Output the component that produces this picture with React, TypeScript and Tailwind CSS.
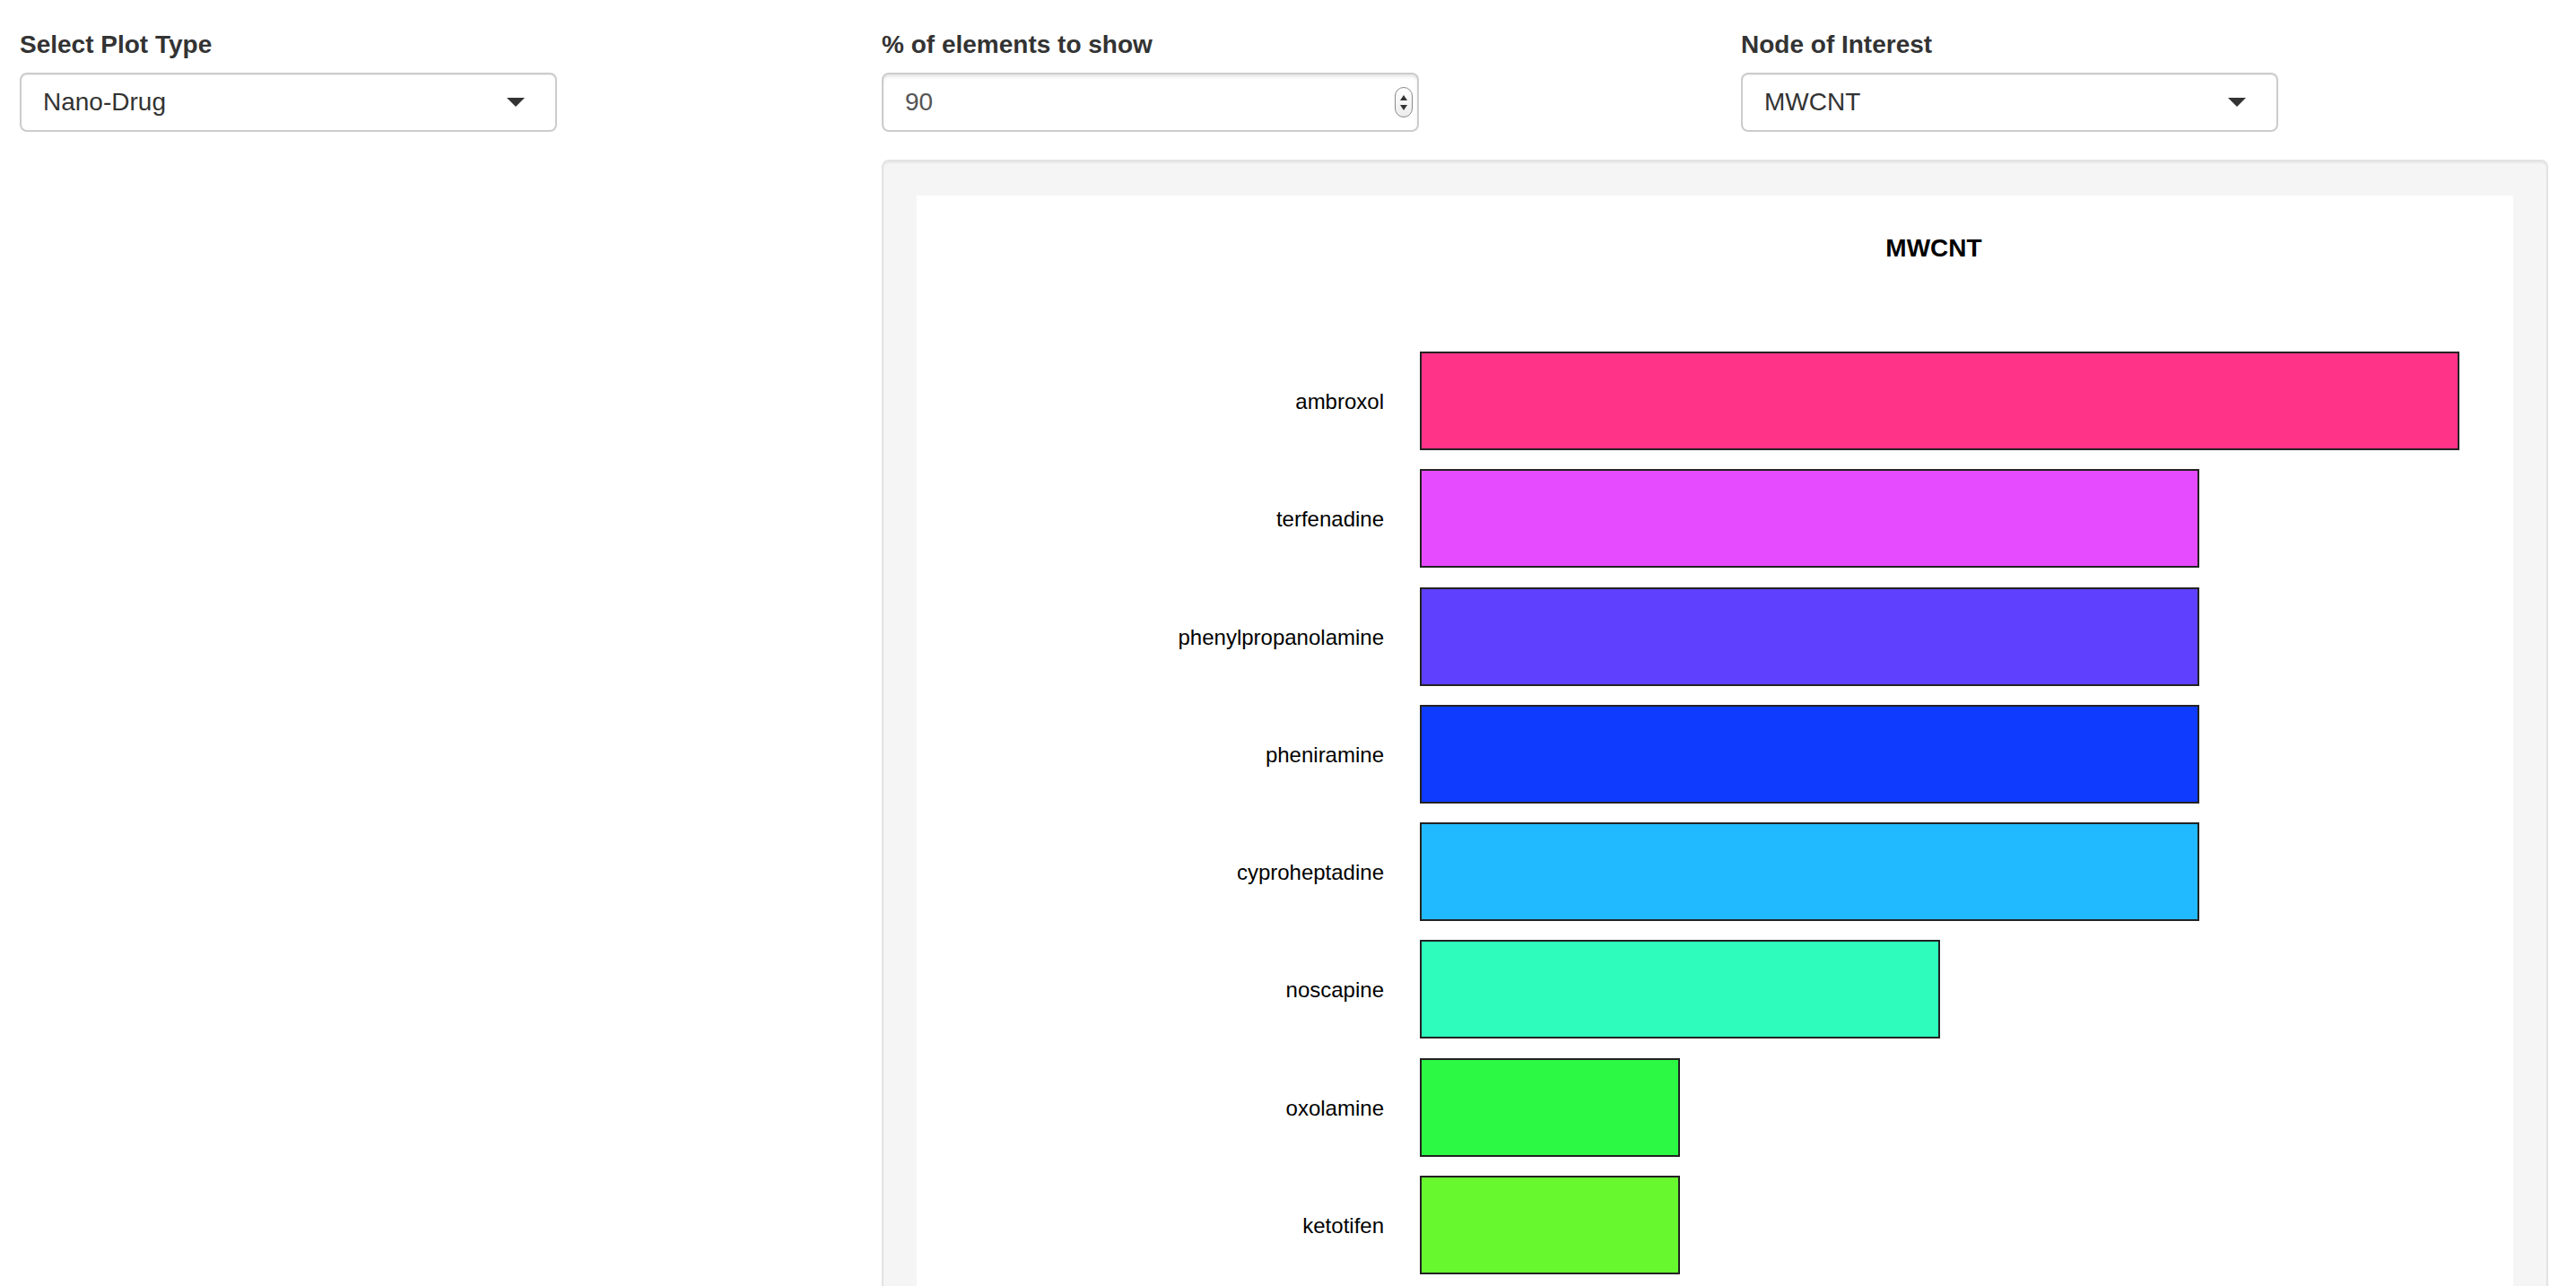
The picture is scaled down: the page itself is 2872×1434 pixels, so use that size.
import React from "react";

type Bar = { name: string; value: number; color: string };

const bars: Bar[] = [
  { name: "ambroxol", value: 4, color: "#ff3388" },
  { name: "terfenadine", value: 3, color: "#e64bff" },
  { name: "phenylpropanolamine", value: 3, color: "#5f40ff" },
  { name: "pheniramine", value: 3, color: "#0f3bff" },
  { name: "cyproheptadine", value: 3, color: "#21b9ff" },
  { name: "noscapine", value: 2, color: "#2dfcbd" },
  { name: "oxolamine", value: 1, color: "#2bf944" },
  { name: "ketotifen", value: 1, color: "#67f92e" },
];

const UNIT = 289.75;

const SelectBox = ({ value }: { value: string }) => {
  return (
    <div className="flex items-center justify-between w-[599px] h-[66px] border-2 border-[#cccccc] rounded-[8px] bg-white pl-[24px] pr-[34px] shadow-[inset_0_1px_1px_rgba(0,0,0,0.075)]">
      <span className="text-[28px] text-[#333333]">{value}</span>
      <div className="w-0 h-0 border-l-[10px] border-r-[10px] border-t-[10px] border-l-transparent border-r-transparent border-t-[#333333]" />
    </div>
  );
};

const NumberBox = ({ value }: { value: string }) => {
  return (
    <div className="flex items-center justify-between w-[599px] h-[66px] border-2 border-[#cccccc] rounded-[8px] bg-white pl-[24px] pr-[5px] shadow-[inset_0_3px_3px_rgba(0,0,0,0.09)]">
      <span className="text-[28px] text-[#555555]">{value}</span>
      <div className="flex flex-col items-center justify-center gap-[5px] w-[20px] h-[34px] rounded-full border border-[#8a8a8a] bg-gradient-to-b from-white to-[#ececec]">
        <svg width="8" height="6" viewBox="0 0 8 6">
          <path d="M4 0 L8 6 L0 6 Z" fill="#333" />
        </svg>
        <svg width="8" height="6" viewBox="0 0 8 6">
          <path d="M0 0 L8 0 L4 6 Z" fill="#333" />
        </svg>
      </div>
    </div>
  );
};

const Field = ({ label, children }: { label: string; children: React.ReactNode }) => {
  return (
    <div className="flex flex-col">
      <label className="text-[28px] leading-[40px] font-bold text-[#333333] mb-[11px]">{label}</label>
      {children}
    </div>
  );
};

const BarChart = () => {
  return (
    <div className="flex flex-col bg-white h-full pt-[45px]">
      <div className="pl-[561px]">
        <div className="w-[1146px] text-center text-[28px] leading-[28px] font-bold text-black">MWCNT</div>
      </div>
      <div className="flex flex-col gap-[21.3px] mt-[101px]">
        {bars.map((b) => (
          <div key={b.name} className="flex items-center h-[110px]">
            <div className="w-[521px] text-right text-[24px] text-black pt-[2px]">{b.name}</div>
            <div
              className="h-[110px] ml-[40px] border-2 border-[#222222]"
              style={{ width: b.value * UNIT, backgroundColor: b.color }}
            />
          </div>
        ))}
      </div>
    </div>
  );
};

export default function App() {
  return (
    <div
      className="h-[1434px] overflow-hidden bg-white flex flex-col pl-[22px] pt-[30px]"
      style={{ fontFamily: '"Liberation Sans", Arial, sans-serif' }}
    >
      <div className="grid grid-cols-[961px_958px_1fr]">
        <Field label="Select Plot Type">
          <SelectBox value="Nano-Drug" />
        </Field>
        <Field label="% of elements to show">
          <NumberBox value="90" />
        </Field>
        <Field label="Node of Interest">
          <SelectBox value="MWCNT" />
        </Field>
      </div>
      <div className="grid grid-cols-[961px_1fr] h-[1500px] shrink-0 mt-[31px]">
        <div />
        <div className="mr-[31px] bg-[#f5f5f5] border-2 border-[#e3e3e3] rounded-[8px] pt-[38px] px-[37px] shadow-[inset_0_2px_2px_rgba(0,0,0,0.05)]">
          <BarChart />
        </div>
      </div>
    </div>
  );
}
